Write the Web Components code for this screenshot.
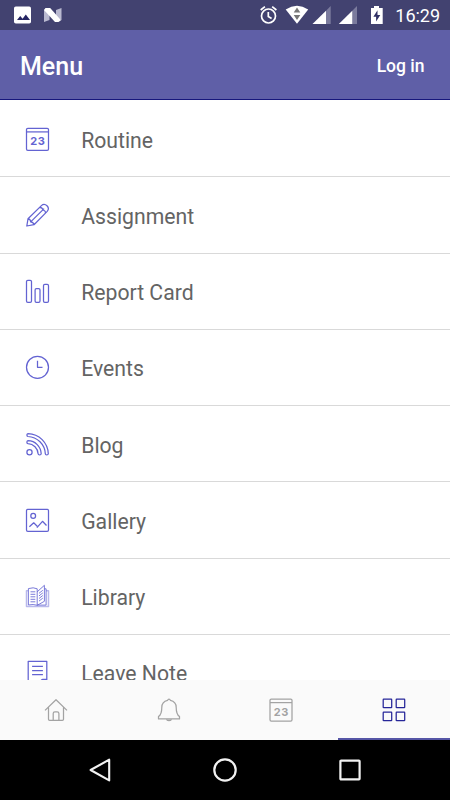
<!DOCTYPE html>
<html lang="en"><head><meta charset="utf-8"><title>Menu</title>
<style>html,body{margin:0;height:100%;background:#fff;overflow:hidden}</style></head>
<body><app-screen></app-screen>
<script>
const cal = `<rect x="1" y="1" width="22" height="22" rx="1.3"/><path d="M1 4.6h22"/><text x="12.3" y="17.7" text-anchor="middle" font-family="Inter, Roboto, sans-serif" font-weight="700" font-size="11" letter-spacing=".6" fill="currentColor" stroke="none">23</text>`;
const ICONS = {
  calendar: cal,
  pencil: `<path d="M1.300 22.700 2.500 15.500 15.900 2.300Q18.700-.2 21.500 2.500 24.200 5.300 21.700 8.100L8.500 21.400ZM2.500 15.500Q5.100 15.600 5.200 18.600 8 18.800 8.500 21.400M5.200 18.600 18.600 5.300M14.200 4q3.100.3 3.200 2.700 2.600.4 2.700 3"/>`,
  bars: `<rect x="1" y="1" width="5" height="22" rx="1.3"/><rect x="9.6" y="9.4" width="4.9" height="13.6" rx="1.3"/><rect x="18" y="5.1" width="5" height="17.9" rx="1.3"/>`,
  clock: `<circle cx="12" cy="12" r="11"/><path d="M12 5.4V12h5"/>`,
  rss: `<circle cx="4" cy="20" r="2.6"/><path d="M2.5 1.3C13.5 1.5 22.5 10.500 22.800 21.500Q22.700 22.700 21.200 22.700 19.900 22.600 19.800 21.500C19.500 12.300 11.700 4.500 2.500 4.200 1 4 1 1.600 2.500 1.300Z"/><path d="M2.500 8.400C9.800 8.600 15.400 14.200 15.700 21.500Q15.600 22.700 14.100 22.700 12.700 22.600 12.600 21.500C12.300 16 8 11.700 2.500 11.400 1 11.200 1 8.600 2.500 8.400Z"/>`,
  gallery: `<rect x="1" y="1" width="22" height="22" rx="1.3"/><circle cx="7.700" cy="7.600" r="2.400"/><path d="M3.900 18.400l4.300-3.900 3.500 3.500m-.3 1.300L17 13l4 4.200"/>`,
  book: `<g stroke-width=".85"><path d="M2.500 6.500H1v15.800h22V6.500h-2.500" stroke-width="1.500" stroke-opacity=".45"/><path d="M2.900 4.300Q8 2.600 11.700 4.500V21Q8 19.600 2.900 20.700ZM11.700 7.500 18.900 1V17L11.700 21M19 4.500h1.600v16.300h-8.900"/><path d="M5 7.500h4.800M5 10h4.800M5 12.500h4.800M5 15h4.800M5 17.500h4.800M13.500 9l3.800-3M13.500 11.600l3.800-3M13.500 14.200l3.800-3M13.500 16.800l3.800-3"/></g>`,
  note: `<path d="M2.700 1h18.600v18.500L17.500 23H2.700ZM21.300 19h-4.200q-2 .2-1.500 4M6.600 6.100h10.800M6.600 10.300h10.800M6.600 14.400h10.800"/>`,
  home: `<path d="M1 12.400 12 1.700l11 10.700M4.500 9.500v11.800q0 1.100 1.100 1.100h12.800q1.100 0 1.100-1.100V9.500M9.200 22.300v-6.800q0-1.700 1.700-1.700h2.300q1.700 0 1.700 1.700v6.800"/>`,
  bell: `<path d="M10.600 2.400Q11 1.100 12 1.100t1.400 1.300c3.400.8 5.800 3.400 5.800 7 0 4.200.3 7 3.300 9.200v2.300H1.500v-2.300C4.500 16.400 4.800 13.600 4.800 9.400c0-3.600 2.400-6.200 5.800-7Z"/><path d="M9.500 21.400q.4 1.300 2.500 1.300t2.500-1.300" fill="currentColor"/>`,
  grid: `<rect x="1.200" y="1.200" width="8.500" height="8.500" rx=".5"/><rect x="14.200" y="1.200" width="8.500" height="8.500" rx=".5"/><rect x="1.200" y="14.200" width="8.500" height="8.500" rx=".5"/><rect x="14.200" y="14.200" width="8.500" height="8.500" rx=".5"/>`,
  back: `<path d="M21.200 1.700v20.700L2.600 12Z" stroke-width="2.100"/>`,
  circle: `<circle cx="12" cy="12" r="10.700" stroke-width="2.200"/>`,
  square: `<rect x="2.400" y="2.600" width="19.200" height="18.800" rx=".7" stroke-width="2.200"/>`
};
const define = (name, html, init) => {
  const t = document.createElement('template'); t.innerHTML = html;
  customElements.define(name, class extends HTMLElement {
    constructor(){ super(); this.attachShadow({mode:'open'}).append(t.content.cloneNode(true)); }
    connectedCallback(){ if (init) init(this, this.shadowRoot); }
  });
};
define('line-icon', `<style>:host{display:block;width:24px;height:24px;flex:none}svg{display:block;width:100%;height:100%;fill:none;stroke:currentColor;stroke-width:1.25;stroke-linejoin:round;overflow:visible}</style><svg viewBox="0 0 24 24"></svg>`,
  (el, root) => { root.querySelector('svg').innerHTML = ICONS[el.getAttribute('name')] || ''; });

define('status-bar', `<style>:host{display:block;height:30px;background:#424270;color:#fff}svg{display:block}</style>
<svg width="450" height="30" viewBox="0 0 450 30">
<rect x="14" y="6.500" width="17" height="17" rx="1.800" fill="#fff"/><path d="M17 20l3.200-4 2.400 2.700 3.200-4.200 4.200 5.500Z" fill="#252563"/>
<path d="M44 9.500 49.500 12v8L44 22ZM61.500 8v12.200L56 18V10Z" fill="#b9b9d0"/><path d="M45.500 8h4.700L61 20.200 58.500 22H55L44 10Z" fill="#fff"/>
<g fill="none" stroke="#fff" stroke-width="1.700"><circle cx="268.500" cy="16" r="7"/><path d="M268.300 12v4.500l3.300 2M260.700 10l4.200-3.400M276.400 10l-4.200-3.400"/></g>
<path d="M285.700 9.500Q297 2.200 308.200 9.500L297 23.700Z" fill="#fff"/><path d="M297 7.500l3.300 5h-6.600ZM293.700 15h6.600l-3.300 5Z" fill="#777"/>
<path d="M330.700 6v18H326V10.700Z" fill="#7b7b9d"/><path d="M326 10.700V24H312.500Z" fill="#fff"/>
<path d="M357 6v18h-4.700V10.700Z" fill="#7b7b9d"/><path d="M352.300 10.700V24H338.800Z" fill="#fff"/>
<path d="M374 6h5v2h3.700v16H371V8h3Z" fill="#fff"/><path d="M377.500 10.300 373.400 16.700h2.700v4.800l4.200-6.600h-2.800Z" fill="#303065"/>
<text x="395.300" y="22" font-family="Roboto, sans-serif" font-size="18" font-weight="400" fill="#fff" textLength="44.700">16:29</text>
</svg>`);

define('title-bar', `<style>:host{display:flex;box-sizing:border-box;height:70px;padding:4px 25.500px 0 20px;align-items:center;justify-content:space-between;background:#5f5fa7;border-bottom:1px solid #17177c;color:#fff;font:500 25px/30px Roboto,sans-serif}.action{font-size:17.500px;margin-top:-2px}</style><slot></slot><span class="action"><slot name="action"></slot></span>`);

define('menu-row', `<style>:host{display:flex;box-sizing:border-box;height:76.250px;flex:none;align-items:center;gap:32.200px;padding-left:25px;border-bottom:1px solid #d9d9d9;color:#646464;font:400 21.200px/28px Roboto,sans-serif}line-icon{color:#6363d2;transform:translate(.5px,.3px)}span{padding-top:3.700px}</style><line-icon></line-icon><span><slot></slot></span>`,
  (el, root) => { const i = root.querySelector('line-icon'); i.setAttribute('name', el.getAttribute('icon')); i.connectedCallback(); });

define('tab-item', `<style>:host{display:flex;box-sizing:border-box;flex:1;align-items:center;justify-content:center;color:#a3a3a3}:host([active]){color:#262699;box-shadow:inset 0 -2px #5555a6}</style><slot></slot>`);
define('tab-bar', `<style>:host{display:flex;height:60px;flex:none;background:#fafafa}</style><slot></slot>`);
define('system-nav', `<style>:host{display:flex;height:60px;flex:none;background:#000;color:#f2f2f2;align-items:center;justify-content:center;gap:101px}</style><line-icon name="back"></line-icon><line-icon name="circle"></line-icon><line-icon name="square"></line-icon>`);

define('app-screen', `<style>:host{display:flex;flex-direction:column;width:450px;height:800px;background:#fff;overflow:hidden}main{flex:1;min-height:0;overflow:hidden;display:flex;flex-direction:column;padding-top:1.100px}status-bar,title-bar{flex:none}</style>
<status-bar></status-bar><title-bar>Menu<span slot="action">Log in</span></title-bar>
<main><menu-row icon="calendar">Routine</menu-row><menu-row icon="pencil">Assignment</menu-row><menu-row icon="bars">Report Card</menu-row><menu-row icon="clock">Events</menu-row><menu-row icon="rss">Blog</menu-row><menu-row icon="gallery">Gallery</menu-row><menu-row icon="book">Library</menu-row><menu-row icon="note">Leave Note</menu-row></main>
<tab-bar><tab-item><line-icon name="home"></line-icon></tab-item><tab-item><line-icon name="bell"></line-icon></tab-item><tab-item><line-icon name="calendar"></line-icon></tab-item><tab-item active><line-icon name="grid"></line-icon></tab-item></tab-bar>
<system-nav></system-nav>`);
</script></body></html>
